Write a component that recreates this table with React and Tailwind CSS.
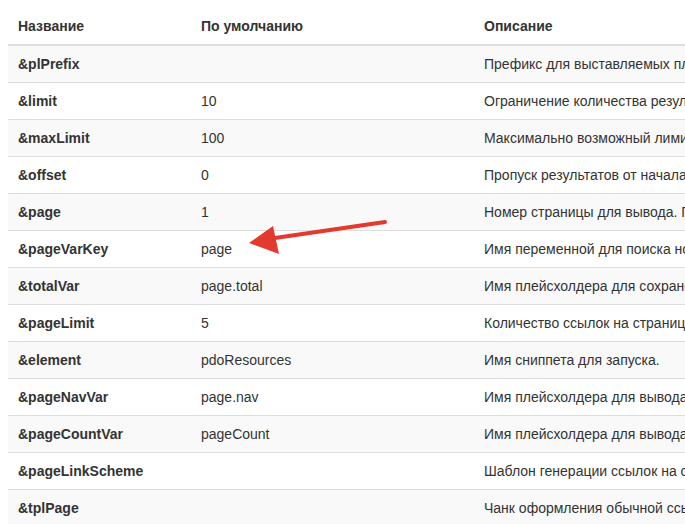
import React from "react";

const rows = [
  ["&plPrefix", "", "Префикс для выставляемых плейсхолдеров"],
  ["&limit", "10", "Ограничение количества результатов на странице"],
  ["&maxLimit", "100", "Максимально возможный лимит выборки"],
  ["&offset", "0", "Пропуск результатов от начала"],
  ["&page", "1", "Номер страницы для вывода. Перебивается номером из URL"],
  ["&pageVarKey", "page", "Имя переменной для поиска номера страницы в URL"],
  ["&totalVar", "page.total", "Имя плейсхолдера для сохранения общего количества"],
  ["&pageLimit", "5", "Количество ссылок на страницы"],
  ["&element", "pdoResources", "Имя сниппета для запуска."],
  ["&pageNavVar", "page.nav", "Имя плейсхолдера для вывода пагинации"],
  ["&pageCountVar", "pageCount", "Имя плейсхолдера для вывода количества страниц"],
  ["&pageLinkScheme", "", "Шаблон генерации ссылок на страницы"],
  ["&tplPage", "", "Чанк оформления обычной ссылки на страницу"],
];

export default function App() {
  return (
    <div className="relative h-[524px] w-[685px] overflow-hidden bg-white p-2 font-['Liberation_Sans',Arial,sans-serif] text-[14px] leading-5 text-[#333]">
      <table className="w-[900px] border-collapse">
        <thead>
          <tr className="border-b-2 border-[#ddd]">
            <th className="w-[183px] px-2.5 py-2 text-left font-bold">Название</th>
            <th className="w-[283px] px-2.5 py-2 text-left font-bold">По умолчанию</th>
            <th className="px-2.5 py-2 text-left font-bold">Описание</th>
          </tr>
        </thead>
        <tbody>
          {rows.map((r, i) => (
            <tr
              key={r[0]}
              className={`${i > 0 ? "border-t border-[#ddd]" : ""} ${i % 2 === 0 ? "bg-[#f9f9f9]" : "bg-white"}`}
            >
              <td className="px-2.5 py-2 font-bold whitespace-nowrap">{r[0]}</td>
              <td className="px-2.5 py-2 whitespace-nowrap">{r[1]}</td>
              <td className="px-2.5 py-2 whitespace-nowrap">{r[2]}</td>
            </tr>
          ))}
        </tbody>
      </table>

      {/* red pointer arrow */}
      <svg className="absolute left-0 top-0" width="685" height="524" viewBox="0 0 685 524">
        <line x1="385" y1="222" x2="268" y2="239" stroke="#e3392f" strokeWidth="4" strokeLinecap="round" />
        <polygon points="249,243 273,226 279,254" fill="#e3392f" />
      </svg>
    </div>
  );
}
